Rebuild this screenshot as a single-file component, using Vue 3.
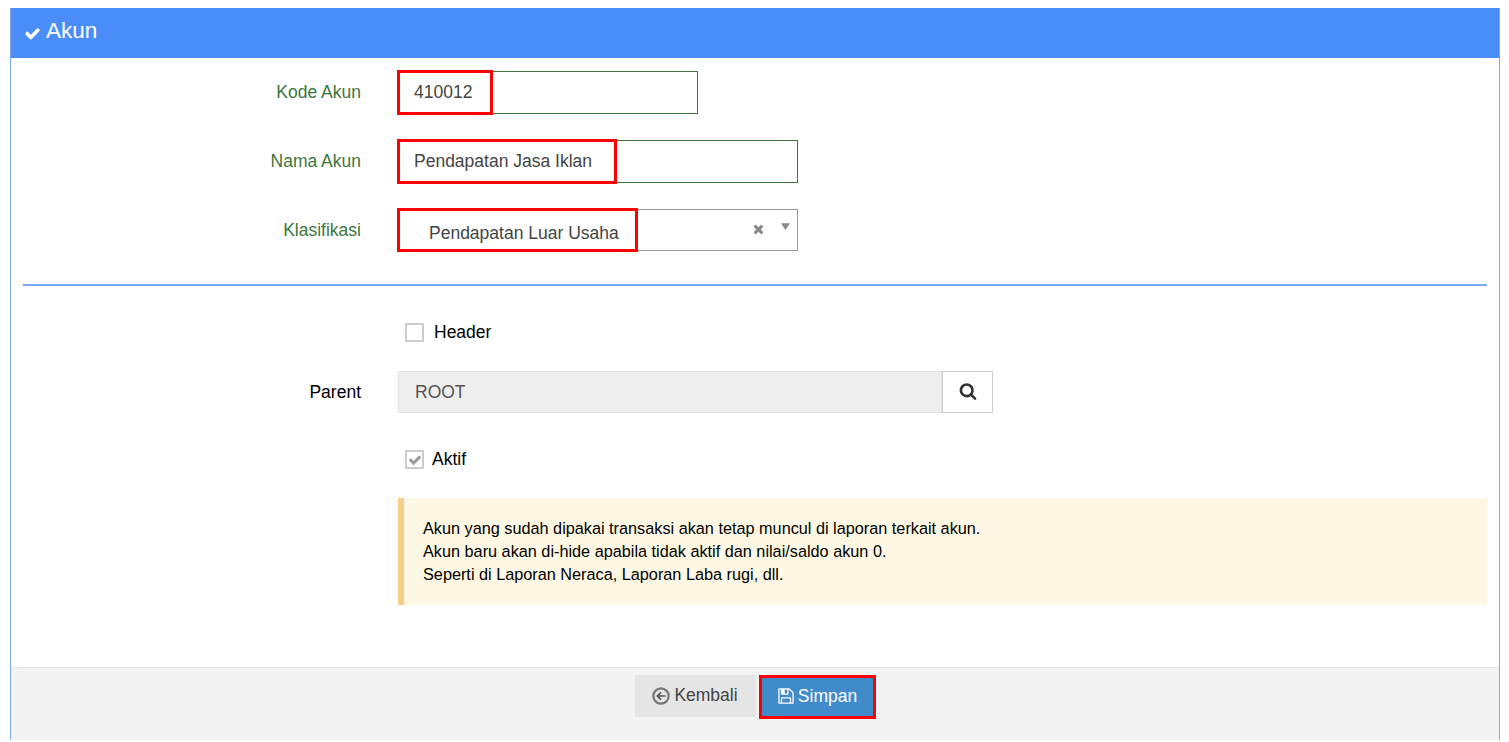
<script setup>
const noteLines = [
  'Akun yang sudah dipakai transaksi akan tetap muncul di laporan terkait akun.',
  'Akun baru akan di-hide apabila tidak aktif dan nilai/saldo akun 0.',
  'Seperti di Laporan Neraca, Laporan Laba rugi, dll.'
]
</script>

<template>
  <div class="panel">
    <div class="panel-head">
      <svg class="head-check" viewBox="0 0 1792 1792"><path fill="currentColor" d="M1671 566q0 40-28 68l-724 724-136 136q-28 28-68 28t-68-28l-136-136-362-362q-28-28-28-68t28-68l136-136q28-28 68-28t68 28l294 295 656-657q28-28 68-28t68 28l136 136q28 28 28 68z"/></svg>
      <span>Akun</span>
    </div>
    <div class="panel-body">
      <div class="row row-kode">
        <label class="lbl green">Kode Akun</label>
        <div class="ctl">
          <div class="field w300 green-b">410012<i class="mark m-kode"></i></div>
        </div>
      </div>
      <div class="row row-nama">
        <label class="lbl green">Nama Akun</label>
        <div class="ctl">
          <div class="field w400 green-b">Pendapatan Jasa Iklan<i class="mark m-nama"></i></div>
        </div>
      </div>
      <div class="row row-klas">
        <label class="lbl green">Klasifikasi</label>
        <div class="ctl">
          <div class="field w400 select">
            <span class="sel-text">Pendapatan Luar Usaha</span>
            <svg class="sel-x" viewBox="0 0 10 10"><path d="M1.500 1.500l7 7M8.500 1.500l-7 7" stroke="currentColor" stroke-width="2.800" fill="none"/></svg>
            <svg class="sel-arrow" viewBox="0 0 8 6"><path d="M0 0h8L4 6z" fill="currentColor"/></svg>
            <i class="mark m-klas"></i>
          </div>
        </div>
      </div>
      <div class="divider"></div>
      <div class="row row-head">
        <div></div>
        <div class="ctl check-line">
          <span class="box"></span><span class="check-label gap-h">Header</span>
        </div>
      </div>
      <div class="row row-parent">
        <label class="lbl">Parent</label>
        <div class="ctl">
          <div class="group">
            <div class="ro">ROOT</div>
            <div class="addon">
              <svg viewBox="0 0 1792 1792"><path fill="currentColor" d="M1216 832q0-185-131.500-316.500t-316.500-131.500-316.500 131.500-131.500 316.500 131.500 316.500 316.500 131.500 316.500-131.500 131.500-316.500zm512 832q0 52-38 90t-90 38q-54 0-90-38l-343-342q-179 124-399 124-143 0-273.500-55.500t-225-150-150-225-55.500-273.500 55.500-273.500 150-225 225-150 273.500-55.500 273.500 55.500 225 150 150 225 55.500 273.500q0 220-124 399l343 343q37 37 37 90z"/></svg>
            </div>
          </div>
        </div>
      </div>
      <div class="row row-aktif">
        <div></div>
        <div class="ctl check-line">
          <span class="box">
            <svg viewBox="0 0 1792 1792"><path fill="currentColor" d="M1671 566q0 40-28 68l-724 724-136 136q-28 28-68 28t-68-28l-136-136-362-362q-28-28-28-68t28-68l136-136q28-28 68-28t68 28l294 295 656-657q28-28 68-28t68 28l136 136q28 28 28 68z"/></svg>
          </span><span class="check-label gap-a">Aktif</span>
        </div>
      </div>
      <div class="row row-note">
        <div></div>
        <div class="note">
          <div v-for="line in noteLines" :key="line">{{ line }}</div>
        </div>
      </div>
    </div>
    <div class="panel-foot">
      <div class="btn btn-back">
        <svg class="ico" viewBox="0 0 16 16"><circle cx="8" cy="8" r="6.800" fill="none" stroke="currentColor" stroke-width="2"/><path d="M12 8H5M8 4.800L4.800 8 8 11.200" fill="none" stroke="#555" stroke-width="1.500"/></svg>
        <span>Kembali</span>
      </div>
      <div class="btn btn-save">
        <svg class="ico" viewBox="0 0 1792 1792"><path fill="currentColor" d="M512 1536h768v-384h-768v384zm896 0h128v-896q0-14-10-38.500t-20-34.500l-281-281q-10-10-34-20t-39-10v416q0 40-28 68t-68 28h-576q-40 0-68-28t-28-68v-416h-128v1280h128v-416q0-40 28-68t68-28h832q40 0 68 28t28 68v416zm-384-928v-320q0-13-9.500-22.500t-22.500-9.500h-192q-13 0-22.500 9.500t-9.500 22.500v320q0 13 9.500 22.500t22.500 9.500h192q13 0 22.500-9.500t9.500-22.500zm640 32v928q0 40-28 68t-68 28h-1344q-40 0-68-28t-28-68v-1344q0-40 28-68t68-28h928q40 0 88 20t76 48l280 280q28 28 48 76t20 88z"/></svg>
        <span>Simpan</span>
      </div>
    </div>
  </div>
</template>

<style scoped>
.panel {
  box-sizing: border-box;
  width: 1490px;
  height: 732px;
  margin: 8px 0 0 10px;
  border-left: 1px solid #7aa9f5;
  border-right: 1px solid #7aa9f5;
  display: flex;
  flex-direction: column;
  font-family: "Liberation Sans", Arial, sans-serif;
  font-size: 17.5px;
  color: #444;
  background: #fff;
}
.panel-head {
  height: 50px;
  flex: none;
  background: #4b8df8;
  color: #fff;
  display: flex;
  align-items: center;
  padding: 0 0 5px 13px;
  box-sizing: border-box;
  font-size: 22.500px;
}
.head-check { width: 17px; height: 17px; margin-right: 5px; margin-top: 5px; }
.panel-body { flex: 1; padding: 13px 12px 0; }
.row {
  display: grid;
  grid-template-columns: 338px 1fr;
  column-gap: 37px;
  align-items: center;
}
.row-nama { margin-top: 26px; }
.row-klas { margin-top: 26px; }
.row-head { margin-top: 36px; height: 18px; }
.row-parent { margin-top: 31px; }
.row-aktif { margin-top: 36px; height: 18px; }
.row-note { margin-top: 31px; }
.lbl { text-align: right; color: #000; }
.row-klas .lbl { padding-top: 1px; }
.green { color: #3c763d; }
.ctl { min-width: 0; }
.field {
  position: relative;
  box-sizing: border-box;
  height: 43px;
  background: #fff;
  display: flex;
  align-items: center;
  padding-left: 15px;
  border: 1px solid #999;
}
.w300 { width: 300px; }
.w400 { width: 400px; }
.green-b { border-color: #3c763d; }
.select { height: 42px; padding-left: 30px; }
.sel-text { padding-top: 6px; }
.sel-x { position: absolute; left: 354px; top: 14px; width: 11px; height: 11px; color: #888; }
.sel-arrow { position: absolute; left: 382px; top: 13px; width: 9px; height: 7px; color: #888; }
.mark { position: absolute; left: -2px; box-sizing: border-box; border: 3px solid #f00; pointer-events: none; }
.m-kode { top: -2px; width: 96px; height: 45px; }
.m-nama { top: -2px; width: 220px; height: 45px; }
.m-klas { top: -2px; width: 241px; height: 44px; }
.divider { height: 2px; background: #7aa9f5; margin-top: 33px; }
.check-line { display: flex; align-items: center; padding-left: 7px; color: #000; }
.box {
  box-sizing: border-box;
  width: 19px;
  height: 19px;
  border: 2px solid #ccc;
  background: #fff;
  color: #999;
  display: flex;
  align-items: center;
  justify-content: center;
}
.box svg { width: 14px; height: 14px; }
.gap-h { margin-left: 10px; }
.gap-a { margin-left: 8px; }
.group { display: flex; height: 42px; width: 595px; }
.ro {
  box-sizing: border-box;
  flex: 1;
  background: #eee;
  border: 1px solid #e5e5e5;
  display: flex;
  align-items: center;
  padding-left: 16px;
  color: #555;
}
.addon {
  box-sizing: border-box;
  width: 51px;
  border: 1px solid #ccc;
  background: #fff;
  color: #333;
  display: flex;
  align-items: center;
  justify-content: center;
}
.addon svg { width: 18px; height: 18px; margin-top: -2px; }
.note {
  box-sizing: border-box;
  height: 107px;
  padding: 19px 0 0 19px;
  background: #fdf7e3;
  border-left: 6px solid #f5cf87;
  color: #000;
  font-size: 16.250px;
  line-height: 23px;
}
.panel-foot {
  box-sizing: border-box;
  flex: none;
  height: 73px;
  background: #f3f3f3;
  border-top: 1px solid #e5e5e5;
  display: flex;
  justify-content: center;
  align-items: flex-start;
  padding-top: 7px;
  column-gap: 3px;
}
.btn {
  box-sizing: border-box;
  display: flex;
  align-items: center;
  justify-content: center;
}
.ico { width: 18px; height: 18px; margin-right: 3px; }
.btn-back { width: 121px; height: 42px; background: #e5e5e5; color: #444; padding-bottom: 1px; }
.btn-back .ico { color: #777; margin-right: 4px; }
.btn-save {
  width: 117px;
  height: 44px;
  background: #428bca;
  color: #fff;
  border: 3px solid #f00;
  padding-bottom: 1px;
}
.btn-save .ico { margin-top: -1px; margin-right: 3px; }
</style>
